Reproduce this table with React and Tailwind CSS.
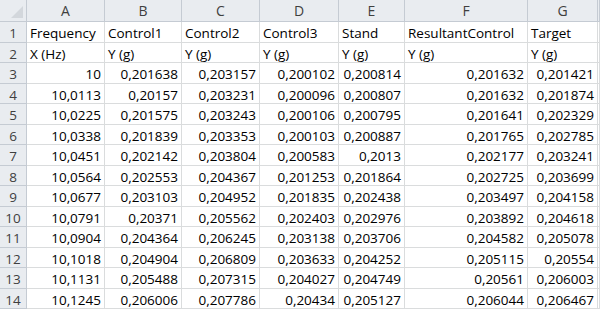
// Лист Excel с данными виброиспытаний
const cols = ['A', 'B', 'C', 'D', 'E', 'F', 'G', ''];

const head1 = ['Frequency', 'Control1', 'Control2', 'Control3', 'Stand', 'ResultantControl', 'Target'];
const head2 = ['X (Hz)', 'Y (g)', 'Y (g)', 'Y (g)', 'Y (g)', 'Y (g)', 'Y (g)'];

const data = [
  ['10', '0,201638', '0,203157', '0,200102', '0,200814', '0,201632', '0,201421'],
  ['10,0113', '0,20157', '0,203231', '0,200096', '0,200807', '0,201632', '0,201874'],
  ['10,0225', '0,201575', '0,203243', '0,200106', '0,200795', '0,201641', '0,202329'],
  ['10,0338', '0,201839', '0,203353', '0,200103', '0,200887', '0,201765', '0,202785'],
  ['10,0451', '0,202142', '0,203804', '0,200583', '0,2013', '0,202177', '0,203241'],
  ['10,0564', '0,202553', '0,204367', '0,201253', '0,201864', '0,202725', '0,203699'],
  ['10,0677', '0,203103', '0,204952', '0,201835', '0,202438', '0,203497', '0,204158'],
  ['10,0791', '0,20371', '0,205562', '0,202403', '0,202976', '0,203892', '0,204618'],
  ['10,0904', '0,204364', '0,206245', '0,203138', '0,203706', '0,204582', '0,205078'],
  ['10,1018', '0,204904', '0,206809', '0,203633', '0,204252', '0,205115', '0,20554'],
  ['10,1131', '0,205488', '0,207315', '0,204027', '0,204749', '0,20561', '0,206003'],
  ['10,1245', '0,206006', '0,207786', '0,20434', '0,205127', '0,206044', '0,206467'],
];

const grid = 'grid grid-cols-[27px_78px_77px_78px_79px_66px_123px_70px_1fr]';
const rowHead = 'flex items-end justify-center pb-[1px] bg-[#e9ecf0] border-r border-b border-[#c5cbd3] text-[#3f3f3f]';
const cell = 'flex items-end pb-[1px] border-r border-b border-[#dadcdd] overflow-hidden whitespace-nowrap';

function TextRow({ n, values }) {
  return (
    <div className={`${grid} h-[20.5px]`}>
      <div className={rowHead}>{n}</div>
      {values.map((v, i) => (
        <div key={i} className={`${cell} px-[3px]`}>{v}</div>
      ))}
      <div className={cell} />
    </div>
  );
}

export default function App() {
  return (
    <div
      className="w-[600px] h-[309px] overflow-hidden bg-white text-[13.5px] leading-none text-black"
      style={{ fontFamily: '"Open Sans", "Liberation Sans", sans-serif' }}
    >
      {/* заголовки столбцов */}
      <div className={`${grid} h-[22px]`}>
        <div className="relative bg-[#e9ecf0] border-r border-b border-[#c5cbd3]">
          <div className="absolute right-[3px] bottom-[3px] w-0 h-0 border-l-[12px] border-l-transparent border-b-[12px] border-b-[#d3d7dc]" />
        </div>
        {cols.map((c, i) => (
          <div
            key={i}
            className="flex items-center justify-center bg-[#e9ecf0] border-r border-b border-[#c5cbd3] text-[14px] text-[#3f3f3f]"
          >
            {c}
          </div>
        ))}
      </div>

      <TextRow n={1} values={head1} />
      <TextRow n={2} values={head2} />

      {data.map((row, r) => (
        <div key={r} className={`${grid} h-[20.5px]`}>
          <div className={rowHead}>{r + 3}</div>
          {row.map((v, i) => (
            <div key={i} className={`${cell} justify-end px-[3px]`}>{v}</div>
          ))}
          <div className={cell} />
        </div>
      ))}
    </div>
  );
}
